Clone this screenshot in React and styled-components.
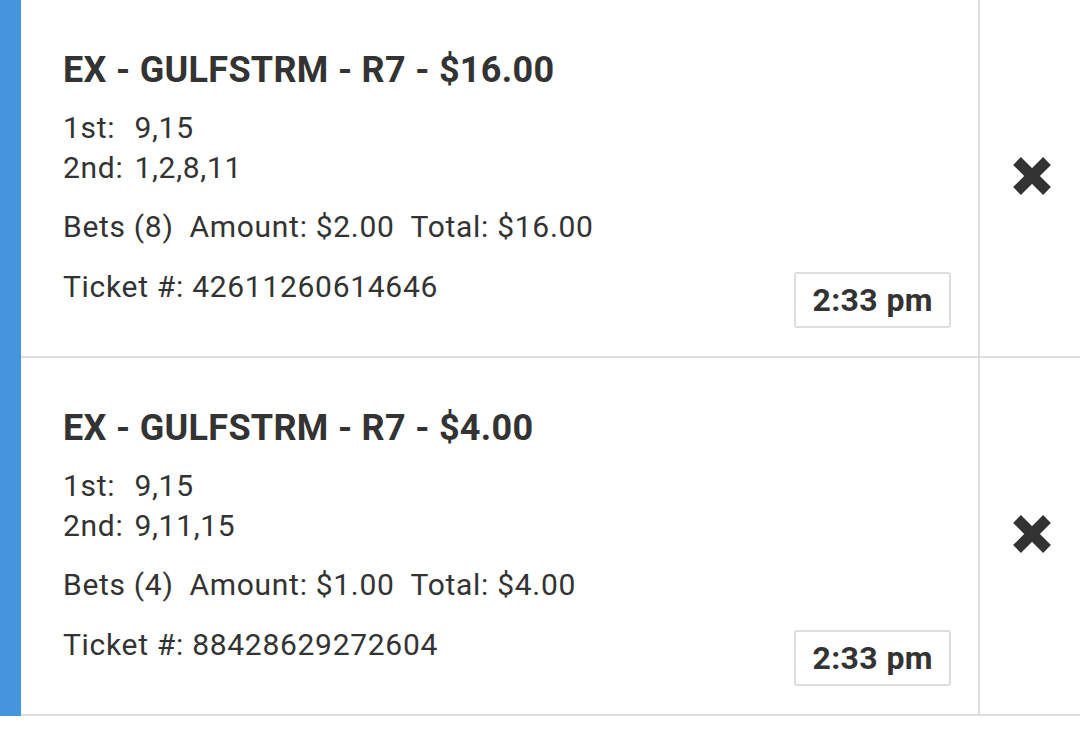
import React from "react";
import styled, { createGlobalStyle } from "styled-components";

const GlobalStyle = createGlobalStyle`
  body {
    margin: 0;
    background: #fff;
    font-family: Roboto, "Liberation Sans", sans-serif;
    color: #333;
  }
`;

const tickets = [
  {
    id: 1,
    title: "EX - GULFSTRM - R7 - $16.00",
    legs: [
      { label: "1st:", runners: "9,15" },
      { label: "2nd:", runners: "1,2,8,11" },
    ],
    bets: 8,
    amount: "$2.00",
    total: "$16.00",
    number: "42611260614646",
    time: "2:33 pm",
  },
  {
    id: 2,
    title: "EX - GULFSTRM - R7 - $4.00",
    legs: [
      { label: "1st:", runners: "9,15" },
      { label: "2nd:", runners: "9,11,15" },
    ],
    bets: 4,
    amount: "$1.00",
    total: "$4.00",
    number: "88428629272604",
    time: "2:33 pm",
  },
];

function CloseIcon() {
  return (
    <svg width="38" height="38" viewBox="0 0 38 38" aria-hidden="true">
      <path
        d="M4 4 L34 34 M34 4 L4 34"
        stroke="#333"
        strokeWidth="11"
        strokeLinecap="butt"
        fill="none"
      />
    </svg>
  );
}

function TicketCard({ ticket }) {
  return (
    <Card>
      <Stripe />
      <Body>
        <Main>
          <Title>{ticket.title}</Title>
          <Legs>
            {ticket.legs.map((leg) => (
              <React.Fragment key={leg.label}>
                <span>{leg.label}</span>
                <span>{leg.runners}</span>
              </React.Fragment>
            ))}
          </Legs>
          <Summary>
            <span>Bets ({ticket.bets})</span>
            <span>Amount: {ticket.amount}</span>
            <span>Total: {ticket.total}</span>
          </Summary>
          <Footer>
            <Line>Ticket #: {ticket.number}</Line>
            <TimeBadge>{ticket.time}</TimeBadge>
          </Footer>
        </Main>
        <Remove type="button" aria-label="Remove ticket">
          <CloseIcon />
        </Remove>
      </Body>
    </Card>
  );
}

export default function App() {
  return (
    <>
      <GlobalStyle />
      <List>
        {tickets.map((t) => (
          <TicketCard key={t.id} ticket={t} />
        ))}
      </List>
    </>
  );
}

const List = styled.div`
  display: flex;
  flex-direction: column;
  width: 1080px;
`;

const Card = styled.div`
  display: flex;
  height: 358px;
`;

const Stripe = styled.div`
  width: 21px;
  flex: none;
  background: #4495dd;
`;

const Body = styled.div`
  flex: 1;
  display: flex;
  border-bottom: 2px solid #ddd;
`;

const Main = styled.div`
  flex: 1;
  display: flex;
  flex-direction: column;
  padding: 49px 27px 0 42px;
`;

const Title = styled.h2`
  margin: 0 0 17px;
  font-size: 36px;
  line-height: 42px;
  font-weight: 700;
  letter-spacing: 0.3px;
  color: #333;
`;

const Line = styled.div`
  font-size: 30px;
  line-height: 40px;
  letter-spacing: 0.7px;
`;

const Legs = styled(Line)`
  display: grid;
  grid-template-columns: max-content 1fr;
  column-gap: 11px;
`;

const Summary = styled(Line)`
  display: flex;
  gap: 16px;
  margin-top: 19px;
`;

const Footer = styled.div`
  display: flex;
  justify-content: space-between;
  align-items: flex-start;
  margin-top: 20px;
`;

const TimeBadge = styled.div`
  margin-top: 5px;
  height: 56px;
  box-sizing: border-box;
  padding: 0 16px;
  display: flex;
  align-items: center;
  border: 2px solid #ddd;
  border-radius: 3px;
  font-size: 32px;
  font-weight: 700;
  letter-spacing: 0.4px;
  line-height: 1;
`;

const Remove = styled.button`
  width: 102px;
  flex: none;
  display: flex;
  align-items: center;
  justify-content: center;
  padding: 0 0 4px 4px;
  margin: 0;
  background: none;
  border: none;
  border-left: 2px solid #ddd;
  cursor: pointer;
`;
